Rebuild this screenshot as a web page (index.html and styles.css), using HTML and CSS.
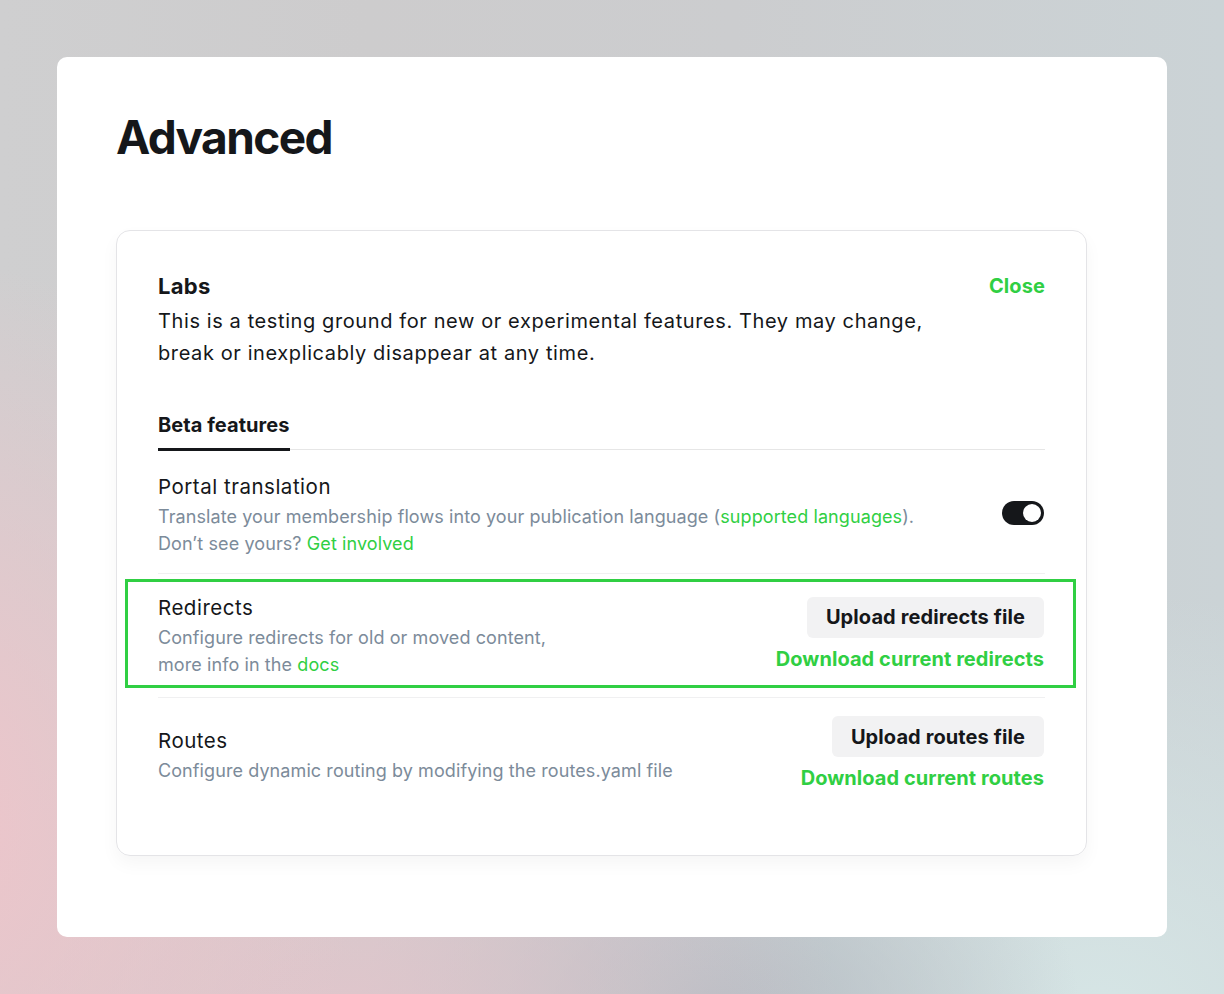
FILE: index.html
```html
<!DOCTYPE html>
<html>
<head>
<meta charset="utf-8">
<link rel="stylesheet" href="styles.css">
</head>
<body>
<div class="stage">
  <div class="panel">
    <h1 class="page-title">Advanced</h1>
    <section class="card">
      <div class="card-head">
        <div class="card-head-text">
          <h2 class="card-title">Labs</h2>
          <p class="card-desc">This is a testing ground for new or experimental features. They may change, break or inexplicably disappear at any time.</p>
        </div>
        <a class="link strong close">Close</a>
      </div>
      <div class="tabs">
        <div class="tab active">Beta features</div>
      </div>
      <div class="rows">
        <div class="row">
          <div class="row-text">
            <div class="row-title">Portal translation</div>
            <div class="row-desc">Translate your membership flows into your publication language (<a class="link">supported languages</a>).<br>Don’t see yours? <a class="link">Get involved</a></div>
          </div>
          <div class="toggle"><span class="knob"></span></div>
        </div>
        <div class="row highlighted">
          <div class="row-text">
            <div class="row-title">Redirects</div>
            <div class="row-desc">Configure redirects for old or moved content,<br>more info in the <a class="link">docs</a></div>
          </div>
          <div class="row-actions">
            <button class="btn">Upload redirects file</button>
            <a class="link strong">Download current redirects</a>
          </div>
        </div>
        <div class="row">
          <div class="row-text">
            <div class="row-title">Routes</div>
            <div class="row-desc">Configure dynamic routing by modifying the routes.yaml file</div>
          </div>
          <div class="row-actions">
            <button class="btn">Upload routes file</button>
            <a class="link strong">Download current routes</a>
          </div>
        </div>
      </div>
    </section>
  </div>
</div>
</body>
</html>
```

FILE: styles.css
```css
* { box-sizing: border-box; }
html, body { margin: 0; padding: 0; }
body {
  width: 1224px;
  height: 994px;
  font-family: Inter, "Noto Sans", sans-serif;
  color: #15171a;
  overflow: hidden;
}
.stage {
  width: 1224px;
  height: 994px;
  padding: 57px;
  background:
    radial-gradient(ellipse 420px 560px at -60px 820px, rgba(240,196,202,0.95), rgba(240,196,202,0) 100%),
    radial-gradient(ellipse 500px 300px at 340px 1010px, rgba(228,196,203,0.8), rgba(228,196,203,0) 100%),
    radial-gradient(ellipse 360px 240px at 720px 1010px, rgba(180,188,195,0.95), rgba(180,188,195,0) 100%),
    radial-gradient(ellipse 520px 420px at 1100px 1010px, rgba(214,230,230,0.95), rgba(214,230,230,0) 100%),
    linear-gradient(90deg, #cfcfd0 0%, #cdcccd 30%, #cccdcf 60%, #cbd3d6 100%);
}
.panel {
  width: 1110px;
  height: 880px;
  background: #fff;
  border-radius: 10px;
  padding: 50px 59px;
}
.page-title {
  margin: 0;
  font-size: 46px;
  font-weight: 700;
  letter-spacing: -0.035em;
  line-height: 60px;
  color: #15171a;
}
.card {
  margin-top: 63px;
  width: 971px;
  border: 1px solid #e4e4e7;
  border-radius: 14px;
  box-shadow: 0 8px 18px rgba(0,0,0,0.04);
  padding: 40px 41px 46px 41px;
}
.card-head {
  display: flex;
  justify-content: space-between;
  align-items: flex-start;
}
.card-title {
  margin: 0;
  font-size: 22px;
  font-weight: 700;
  line-height: 30px;
  letter-spacing: 0.015em;
}
.card-desc {
  margin: 4px 0 0;
  font-size: 20px;
  line-height: 32px;
  max-width: 790px;
  letter-spacing: 0.03em;
}
.close { font-size: 20px; line-height: 30px; letter-spacing: 0.005em; }
.link { color: #30cf43; text-decoration: none; cursor: pointer; }
.link.strong { font-weight: 700; }
.tabs {
  margin-top: 33px;
  border-bottom: 1px solid #e6e6e6;
  display: flex;
}
.tab {
  font-size: 20px;
  font-weight: 700;
  line-height: 28px;
  padding: 9px 0 9px;
  border-bottom: 3px solid transparent;
  margin-bottom: -2px;
  letter-spacing: 0.003em;
}
.tab.active { border-bottom-color: #15171a; }
.row {
  display: flex;
  justify-content: space-between;
  align-items: center;
  padding: 15px 0 19px;
  border-bottom: 1px solid #f0f0f1;
  position: relative;
}
.row:first-child { padding: 18px 0 16px; }
.row:last-child { border-bottom: none; padding: 18px 0 19px; }
.row-text { padding-top: 5px; }
.row-title {
  font-size: 20.5px;
  line-height: 28px;
  letter-spacing: 0.025em;
}
.row-desc {
  font-size: 18px;
  line-height: 27px;
  color: #7c8b9a;
  margin-top: 2px;
  letter-spacing: 0.005em;
}
.toggle {
  width: 42px;
  height: 24px;
  background: #15171a;
  border-radius: 12px;
  display: flex;
  align-items: center;
  justify-content: flex-end;
  padding: 0 3px;
  margin-right: 1px;
}
.knob {
  width: 18px;
  height: 18px;
  border-radius: 50%;
  background: #fff;
}
.row-actions {
  display: flex;
  flex-direction: column;
  align-items: flex-end;
  gap: 9px;
  margin-right: 1px;
}
.btn {
  font-family: inherit;
  font-size: 20px;
  font-weight: 700;
  color: #15171a;
  background: #f2f2f3;
  border: none;
  border-radius: 6px;
  height: 41px;
  padding: 0 19px;
  letter-spacing: 0.005em;
}
.row-actions .link { font-size: 20px; line-height: 24px; letter-spacing: 0.003em; }
.highlighted::after {
  content: "";
  position: absolute;
  left: -33px;
  right: -31px;
  top: 5px;
  bottom: 9px;
  border: 3px solid #30cf43;
  pointer-events: none;
}
```
